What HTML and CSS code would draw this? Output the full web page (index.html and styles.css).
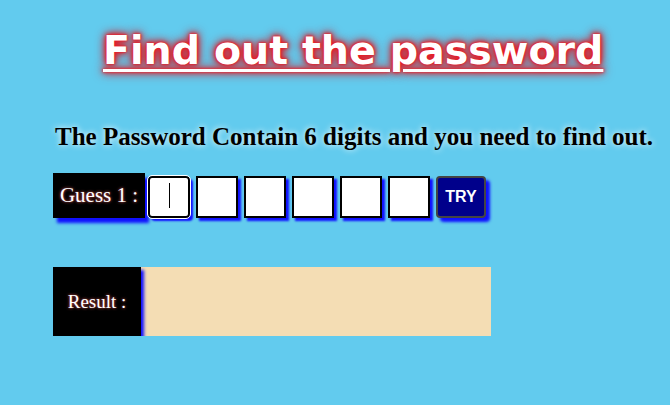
FILE: index.html
```html
<!DOCTYPE html>
<html>
<head>
<meta charset="utf-8">
<link rel="stylesheet" href="styles.css">
</head>
<body>
<div class="page">
  <h1 class="title">Find out the password</h1>
  <p class="intro">The Password Contain 6 digits and you need to find out.</p>
  <div class="guess-row">
    <div class="label">Guess 1 :</div>
    <div class="digits">
      <span class="digit-wrap">
        <input class="digit focus" type="text" maxlength="1">
        <span class="caret"></span>
      </span>
      <input class="digit" type="text" maxlength="1">
      <input class="digit" type="text" maxlength="1">
      <input class="digit" type="text" maxlength="1">
      <input class="digit" type="text" maxlength="1">
      <input class="digit" type="text" maxlength="1">
    </div>
    <button class="try">TRY</button>
  </div>
  <div class="result-row">
    <div class="label result-label">Result :</div>
    <div class="result-box"></div>
  </div>
</div>
</body>
</html>
```
FILE: styles.css
```css
html, body {
  margin: 0;
  padding: 0;
  background: #62cbee;
}
.page {
  padding: 28px 0 0 53px;
  font-family: "Liberation Serif", "Times New Roman", serif;
}
.title {
  margin: 0 0 0 50px;
  font-family: "DejaVu Sans", Verdana, sans-serif;
  font-weight: bold;
  font-size: 39.6px;
  line-height: 44px;
  color: #fff;
  text-decoration: underline;
  text-decoration-thickness: 3px;
  text-underline-offset: 5px;
  text-shadow: 0 0 1px #ee1c24, 0 0 3px #ee1c24, 0 0 5px #e81c24, 0 0 8px #e01c28, 0 0 12px #c02030;
}
.intro {
  margin: 50px 0 0 2px;
  font-weight: bold;
  font-size: 25px;
  line-height: 30px;
  color: #000;
  text-shadow: 0 0 6px #fff;
}
.guess-row {
  margin-top: 21px;
  display: flex;
  align-items: flex-start;
  gap: 3px;
}
.label {
  background: #000;
  color: #fff;
  font-size: 21px;
  box-shadow: 4px 5px 3px #1010ff;
  text-shadow: 0 0 3px #ff6060;
}
.guess-row .label {
  width: 92px;
  height: 45px;
  display: flex;
  align-items: center;
  justify-content: center;
}
.digits {
  margin-top: 3px;
  display: flex;
  gap: 6px;
}
.digit-wrap {
  position: relative;
  display: block;
  width: 42px;
  height: 42px;
}
.caret {
  position: absolute;
  left: 21px;
  top: 7px;
  width: 1px;
  height: 25px;
  background: #000;
}
.digit {
  box-sizing: border-box;
  display: block;
  width: 42px;
  height: 42px;
  margin: 0;
  border: 2px solid #000;
  background: #fff;
  box-shadow: 3px 3px 2px #1010ff;
  padding: 0;
  font-size: 20px;
}
.digit.focus, .digit:focus {
  border-radius: 4px;
  outline: 1px solid #fff;
}
.try {
  margin: 3px 0 0 3px;
  box-sizing: border-box;
  width: 50px;
  height: 42px;
  background: #00008b;
  color: #fff;
  font-family: "Liberation Sans", Arial, sans-serif;
  font-weight: bold;
  font-size: 16px;
  border: 2px solid #444;
  border-radius: 4px;
  box-shadow: 4px 4px 3px #1010ff;
  padding: 0;
}
.result-row {
  margin-top: 49px;
  display: flex;
}
.result-label {
  width: 88px;
  height: 69px;
  display: flex;
  align-items: center;
  justify-content: center;
  font-size: 19px;
  position: relative;
  z-index: 1;
  box-shadow: 3px 3px 3px #1010ff;
}
.result-box {
  width: 350px;
  height: 69px;
  background: #f4ddb4;
}
```
